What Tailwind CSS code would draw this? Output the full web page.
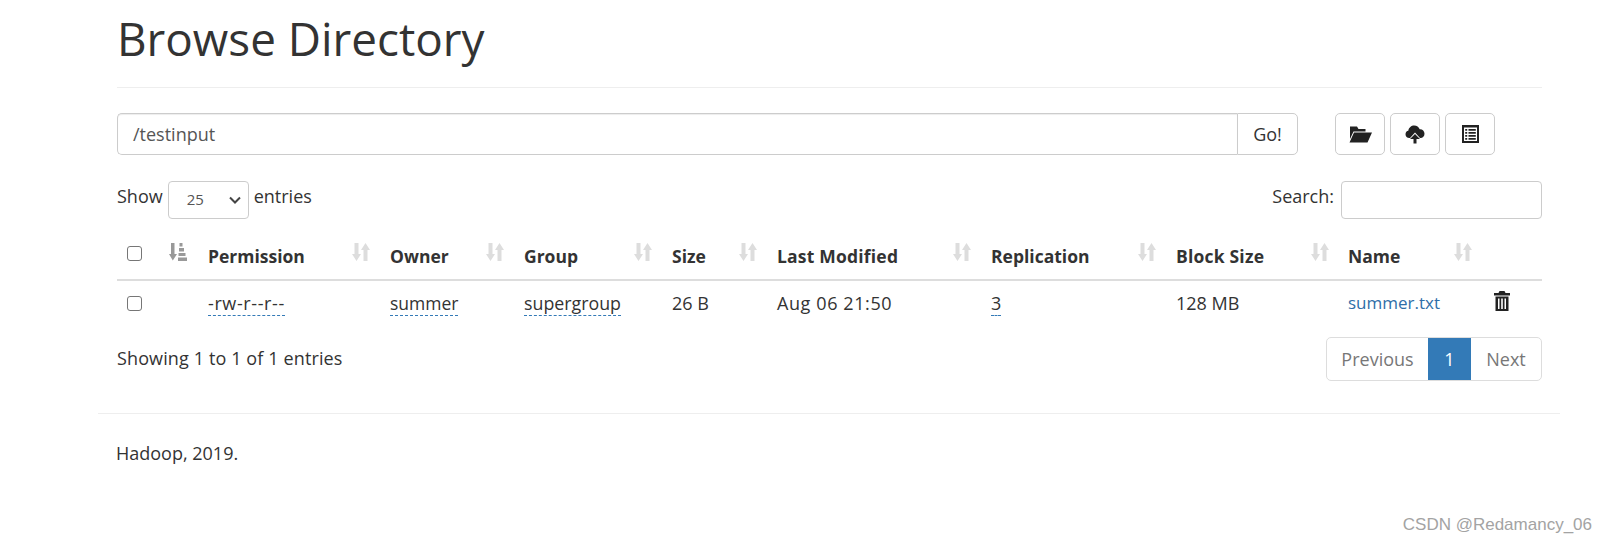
<!DOCTYPE html>
<html><head><meta charset="utf-8"><script src="https://cdn.jsdelivr.net/npm/@tailwindcss/browser@4"></script></head>
<body class="bg-white text-[#333] font-['Open_Sans','Noto_Sans',sans-serif] text-[18px] overflow-hidden">
<div class="relative w-[1605px] h-[545px] overflow-hidden">
<div class="ml-[98px] mr-[45px] pl-[19px] pr-[18px] border-b border-[#eee] h-[414px]">
  <div class="h-[88px] border-b border-[#eee]">
    <h1 class="text-[45.800px] leading-[76px] font-normal text-[#333]">Browse Directory</h1>
  </div>
  <div class="flex mt-[25px] h-[42px]">
    <div class="w-[1120px] border border-[#ccc] rounded-l-[5px] border-r-0 flex items-center pl-[15px] text-[#555] shadow-[inset_0_1px_1px_rgba(0,0,0,0.075)]">/testinput</div>
    <div class="w-[61px] border border-[#ccc] rounded-r-[5px] flex items-center justify-center">Go!</div>
    <div class="flex gap-[5px] ml-[37px]">
      <div class="w-[50px] border border-[#ccc] rounded-[5px] flex items-center justify-center">
        <svg width="24" height="17" viewBox="0 0 24 17"><path fill="#222" d="M2 0.500h7l1.500 2.500h7v2.500H5.500L2 13zM6 6.500h18L19.500 16.500H1.500z"/></svg>
      </div>
      <div class="w-[50px] border border-[#ccc] rounded-[5px] flex items-center justify-center">
        <svg width="20" height="20" viewBox="0 0 20 20"><path fill="#222" d="M5 14H4.500C2 14 0.500 12.500 0.500 10.200C0.500 8.400 1.800 7 3.300 6.800C3.800 3.500 6.300 1.500 9.200 1.500C11.800 1.500 13.800 3 14.700 5.200C17.400 5 19.500 7 19.500 9.800C19.500 12.300 17.800 14 15.500 14H15L10 8.500z"/><path fill="#222" d="M10 10l5 5h-3.500v4.500h-3V15H5z"/></svg>
      </div>
      <div class="w-[50px] border border-[#ccc] rounded-[5px] flex items-center justify-center">
        <svg width="17" height="18" viewBox="0 0 17 18"><path fill="#222" fill-rule="evenodd" d="M0 0h17v18H0zM2 2.500v13.500h13V2.500zM3.200 4h2v1.800h-2zM6.500 4h7.300v1.800H6.500zM3.200 7h2v1.800h-2zM6.500 7h7.300v1.800H6.500zM3.200 10h2v1.800h-2zM6.500 10h7.300v1.800H6.500zM3.200 13h2v1.800h-2zM6.500 13h7.300v1.800H6.500z"/></svg>
      </div>
    </div>
  </div>
  <div class="flex items-center justify-between mt-[25px] h-[39px]">
    <div class="flex items-center">
      <span class="-mt-[6px]">Show</span>
      <div class="w-[81px] h-[38px] mx-[5px] border border-[#ccc] rounded-[4px] flex items-center justify-between pl-[18px] pr-[7px] text-[15px] text-[#555]">
        <span>25</span>
        <svg width="12" height="8" viewBox="0 0 12 8"><path d="M1 1.500l5 5 5-5" fill="none" stroke="#444" stroke-width="2"/></svg>
      </div>
      <span class="-mt-[6px]">entries</span>
    </div>
    <div class="flex items-center">
      <span class="-mt-[6px]">Search:</span>
      <div class="w-[201px] h-[38px] ml-[7px] border border-[#ccc] rounded-[4px]"></div>
    </div>
  </div>
  <table class="table-fixed w-[1425px] mt-[11px] border-collapse">
    <thead>
      <tr class="h-[50px] border-b-2 border-[#ddd] text-[17.500px]">
        <th class="w-[43px] pl-[10px] text-left"><span class="block w-[15px] h-[15px] border border-[#767676] rounded-[3px] -mt-[3px]"></span></th>
        <th class="w-[37px] text-left pl-[9px]">
          <svg class="-mt-[6px]" width="18" height="18" viewBox="0 0 18 18"><path fill="#999" d="M2 0h3.500v11H8L3.800 17.500 0 11h2zM10.500 0h3v3.500h-3zM10 5h5v3.500h-5zM9.500 10h7v3h-7zM9 14.500h9V18H9z"/></svg>
        </th>
        <th class="w-[182px] pl-[11px] pr-[9px]"><div class="flex justify-between items-center"><span class="mt-[3px]">Permission</span><svg class="-mt-[5px]" width="18" height="18" viewBox="0 0 18 18"><path fill="#ddd" d="M2.500 0h4v11h2.500L4.500 18 0 11h2.500zM11.500 18h4V7H18L13.500 0 9 7h2.500z"/></svg></div></th>
        <th class="w-[134px] pl-[11px] pr-[9px]"><div class="flex justify-between items-center"><span class="mt-[3px]">Owner</span><svg class="-mt-[5px]" width="18" height="18" viewBox="0 0 18 18"><path fill="#ddd" d="M2.500 0h4v11h2.500L4.500 18 0 11h2.500zM11.500 18h4V7H18L13.500 0 9 7h2.500z"/></svg></div></th>
        <th class="w-[148px] pl-[11px] pr-[9px]"><div class="flex justify-between items-center"><span class="mt-[3px]">Group</span><svg class="-mt-[5px]" width="18" height="18" viewBox="0 0 18 18"><path fill="#ddd" d="M2.500 0h4v11h2.500L4.500 18 0 11h2.500zM11.500 18h4V7H18L13.500 0 9 7h2.500z"/></svg></div></th>
        <th class="w-[105px] pl-[11px] pr-[9px]"><div class="flex justify-between items-center"><span class="mt-[3px]">Size</span><svg class="-mt-[5px]" width="18" height="18" viewBox="0 0 18 18"><path fill="#ddd" d="M2.500 0h4v11h2.500L4.500 18 0 11h2.500zM11.500 18h4V7H18L13.500 0 9 7h2.500z"/></svg></div></th>
        <th class="w-[214px] pl-[11px] pr-[9px]"><div class="flex justify-between items-center"><span class="mt-[3px] tracking-[0.2px]">Last Modified</span><svg class="-mt-[5px]" width="18" height="18" viewBox="0 0 18 18"><path fill="#ddd" d="M2.500 0h4v11h2.500L4.500 18 0 11h2.500zM11.500 18h4V7H18L13.500 0 9 7h2.500z"/></svg></div></th>
        <th class="w-[185px] pl-[11px] pr-[9px]"><div class="flex justify-between items-center"><span class="mt-[3px]">Replication</span><svg class="-mt-[5px]" width="18" height="18" viewBox="0 0 18 18"><path fill="#ddd" d="M2.500 0h4v11h2.500L4.500 18 0 11h2.500zM11.500 18h4V7H18L13.500 0 9 7h2.500z"/></svg></div></th>
        <th class="w-[173px] pl-[11px] pr-[9px]"><div class="flex justify-between items-center"><span class="mt-[3px] tracking-[0.2px]">Block Size</span><svg class="-mt-[5px]" width="18" height="18" viewBox="0 0 18 18"><path fill="#ddd" d="M2.500 0h4v11h2.500L4.500 18 0 11h2.500zM11.500 18h4V7H18L13.500 0 9 7h2.500z"/></svg></div></th>
        <th class="w-[204px] pl-[10px] pr-[70px]"><div class="flex justify-between items-center"><span class="mt-[3px]">Name</span><svg class="-mt-[5px]" width="18" height="18" viewBox="0 0 18 18"><path fill="#ddd" d="M2.500 0h4v11h2.500L4.500 18 0 11h2.500zM11.500 18h4V7H18L13.500 0 9 7h2.500z"/></svg></div></th>
      </tr>
    </thead>
    <tbody>
      <tr class="h-[45px]">
        <td class="pl-[10px]"><span class="block w-[15px] h-[15px] border border-[#767676] rounded-[3px]"></span></td>
        <td></td>
        <td class="pl-[11px]"><span class="border-b border-dashed border-[#337ab7] tracking-[0.6px]">-rw-r--r--</span></td>
        <td class="pl-[11px]"><span class="border-b border-dashed border-[#337ab7] text-[17.500px]">summer</span></td>
        <td class="pl-[11px]"><span class="border-b border-dashed border-[#337ab7] text-[17.800px]">supergroup</span></td>
        <td class="pl-[11px]">26 B</td>
        <td class="pl-[11px] tracking-[0.6px]">Aug 06 21:50</td>
        <td class="pl-[11px]"><span class="border-b border-dashed border-[#337ab7]">3</span></td>
        <td class="pl-[11px]">128 MB</td>
        <td class="pl-[10px]"><div class="flex items-center justify-between pr-[32px]"><span class="text-[#2f6ea8] text-[17px]">summer.txt</span>
          <svg width="16" height="20" viewBox="0 0 16 20" class="-mt-[4px]"><path fill="#222" fill-rule="evenodd" d="M5.500 0h5l1 2H16v2.500H0V2h4.500zM1.500 5.500h13V20h-13zM4 7.500v10.500h1.500V7.500zM7.200 7.500v10.500h1.600V7.500zM10.500 7.500v10.500H12V7.500z"/></svg></div></td>
      </tr>
    </tbody>
  </table>
  <div class="flex items-center justify-between mt-[12px]">
    <span class="tracking-[0.12px] -mt-[1px]">Showing 1 to 1 of 1 entries</span>
    <div class="flex h-[44px] border border-[#ddd] rounded-[5px] overflow-hidden">
      <span class="w-[101px] flex items-center justify-center text-[#777]">Previous</span>
      <span class="w-[43px] flex items-center justify-center bg-[#337ab7] text-white">1</span>
      <span class="w-[70px] flex items-center justify-center text-[#777]">Next</span>
    </div>
  </div>
</div>
<div class="ml-[116px] mt-[27px] leading-[24px] text-[#333]">Hadoop, 2019.</div>
<span class="absolute right-[13px] top-[515px] text-[17px] leading-[20px] text-[#a3a3a3] font-['Liberation_Sans',sans-serif]">CSDN @Redamancy_06</span>
</div>
</body></html>
